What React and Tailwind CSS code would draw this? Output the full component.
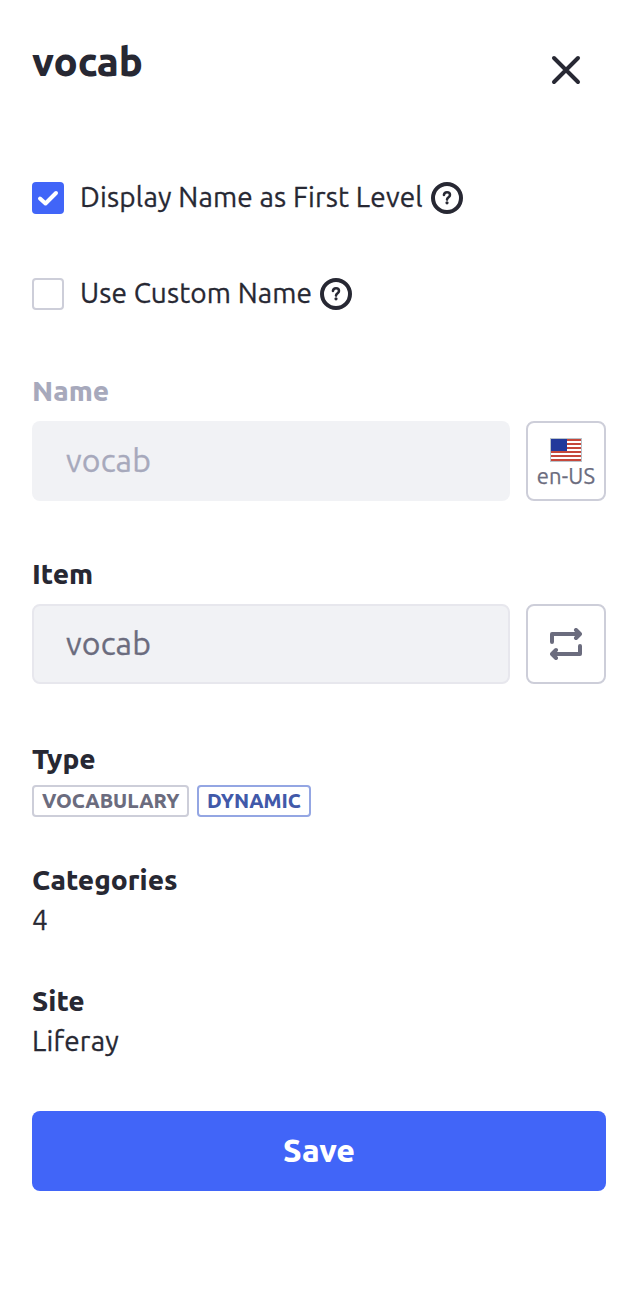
import React from 'react';

function HelpIcon() {
  return (
    <svg className="size-8 shrink-0" viewBox="0 0 32 32" fill="none" stroke="#272833">
      <circle cx="16" cy="16" r="14" strokeWidth="4" />
      <path d="M12.900 13c.2-1.800 1.400-2.700 3.100-2.700 1.800 0 3 1 3 2.600 0 2.300-2.900 2.200-3 4.700" strokeWidth="2.500" strokeLinecap="round" />
      <circle cx="16" cy="20.800" r="1.600" fill="#272833" stroke="none" />
    </svg>
  );
}

function CheckRow({ checked, children }) {
  return (
    <div className="flex h-8 items-center">
      {checked ? (
        <span className="flex size-8 items-center justify-center rounded-[4px] bg-[#4165f8]">
          <svg className="size-8" viewBox="0 0 32 32" fill="none" stroke="#fff" strokeWidth="4" strokeLinecap="round" strokeLinejoin="round">
            <path d="M8 16.500l5.500 5L24 11" />
          </svg>
        </span>
      ) : (
        <span className="size-8 rounded-[4px] border-2 border-[#cdced9] bg-white" />
      )}
      {children}
      <HelpIcon />
    </div>
  );
}

function Flag() {
  return (
    <svg className="h-6 w-8" viewBox="0 0 32 24">
      <rect width="32" height="24" fill="#b9c3cb" />
      <rect x="1" y="1" width="30" height="22" fill="#fff" />
      <path d="M1 2h30M1 6h30M1 10h30M1 14h30M1 18h30M1 22h30" stroke="#c5473b" strokeWidth="2" />
      <rect x="1" y="1" width="16" height="12" fill="#22399b" />
    </svg>
  );
}

export default function App() {
  return (
    <main className="flex h-[1314px] w-[626px] flex-col bg-white pr-5 pl-8 font-['Ubuntu','Noto_Sans',sans-serif] text-[28px] leading-8 font-normal text-[#272833]">
      <header className="flex items-start justify-between pt-9">
        <h1 className="pt-px text-[40px] leading-[50px] font-extrabold whitespace-nowrap">vocab</h1>
        <button className="mt-[18px] mr-6 size-8" aria-label="Close">
          <svg viewBox="0 0 32 32" fill="none" stroke="#272833" strokeWidth="4" strokeLinecap="round">
            <path d="M4 4l24 24M28 4L4 28" />
          </svg>
        </button>
      </header>

      <section className="mt-[95px] flex flex-col gap-16">
        <CheckRow checked>
          <span className="ml-4 w-[351px] pb-0.5 tracking-[0.18px] whitespace-nowrap [-webkit-text-stroke:0.3px]">Display Name as First Level</span>
        </CheckRow>
        <CheckRow>
          <span className="ml-4 w-[240px] pb-0.5 tracking-[0.14px] whitespace-nowrap [-webkit-text-stroke:0.3px]">Use Custom Name</span>
        </CheckRow>
      </section>

      <section className="mt-[65px]">
        <label className="block font-extrabold text-[#a7a9bc]">Name</label>
        <div className="mt-[14px] flex gap-4">
          <div className="flex h-20 flex-1 items-center rounded-lg bg-[#f1f2f5] pb-0.5 pl-[34px] text-[32px] tracking-[0.18px] text-[#a7a9bc] [-webkit-text-stroke:0.3px]">vocab</div>
          <button className="flex h-20 w-20 flex-col items-center rounded-lg border-2 border-[#cdced9] pt-[15px] text-[#6b6c7e]">
            <Flag />
            <span className="text-[22px] leading-7 tracking-[0.2px] whitespace-nowrap [-webkit-text-stroke:0.25px]">en-US</span>
          </button>
        </div>
      </section>

      <section className="mt-[57px]">
        <label className="block font-extrabold">Item</label>
        <div className="mt-[14px] flex gap-4">
          <div className="flex h-20 flex-1 items-center rounded-lg border-2 border-[#e7e7ed] bg-[#f1f2f5] pb-0.5 pl-8 text-[32px] tracking-[0.18px] text-[#6b6c7e] [-webkit-text-stroke:0.3px]">vocab</div>
          <button className="flex h-20 w-20 items-center justify-center rounded-lg border-2 border-[#cdced9]" aria-label="Change item">
            <svg className="size-8" viewBox="0 0 32 32" fill="none" stroke="#6b6c7e" strokeWidth="4" strokeLinecap="round" strokeLinejoin="round">
              <path d="M2 14V6h25M30 18v8H5" />
              <path d="M26 2l4 4-4 4M6 22l-4 4 4 4" />
            </svg>
          </button>
        </div>
      </section>

      <section className="mt-[59px]">
        <h2 className="font-extrabold">Type</h2>
        <div className="mt-[10px] flex gap-2 text-[20px] leading-7 font-extrabold">
          <span className="h-8 w-[157px] rounded-[4px] border-2 border-[#cdced9] pl-2 whitespace-nowrap text-[#6b6c7e]">VOCABULARY</span>
          <span className="h-8 w-[114px] rounded-[4px] border-2 border-[#94a6e3] pl-2 whitespace-nowrap text-[#4159a9]">DYNAMIC</span>
        </div>
      </section>

      <section className="mt-[47px]">
        <h2 className="font-extrabold">Categories</h2>
        <p className="mt-2 [-webkit-text-stroke:0.3px]">4</p>
      </section>

      <section className="mt-[49px]">
        <h2 className="font-extrabold">Site</h2>
        <p className="mt-2 tracking-[0.18px] [-webkit-text-stroke:0.3px]">Liferay</p>
      </section>

      <button className="mt-[54px] flex h-20 items-center justify-center rounded-lg bg-[#4165f8] pb-0.5 text-[32px] font-extrabold text-white">Save</button>
    </main>
  );
}
